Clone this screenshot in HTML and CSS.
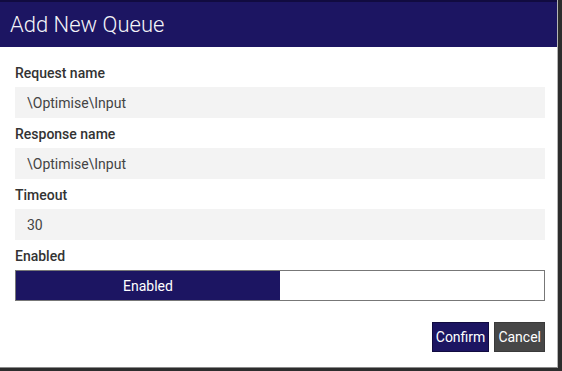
FILE: index.html
```html
<!DOCTYPE html>
<html lang="en">
<head>
  <meta charset="UTF-8">
  <title>Add New Queue</title>
  <link rel="stylesheet" href="styles.css">
</head>
<body>

  <div class="dialog">
    <div class="dialog-header">
      <h2>Add New Queue</h2>
    </div>

    <div class="dialog-body">
      <div class="field">
        <label for="request">Request name</label>
        <input type="text" id="request" value="\Optimise\Input">
      </div>

      <div class="field">
        <label for="response">Response name</label>
        <input type="text" id="response" value="\Optimise\Input">
      </div>

      <div class="field">
        <label for="timeout">Timeout</label>
        <input type="text" id="timeout" value="30">
      </div>

      <div class="field">
        <label>Enabled</label>
        <div class="toggle">
          <button class="toggle-option active">Enabled</button>
          <button class="toggle-option"></button>
        </div>
      </div>

      <div class="actions">
        <button class="btn btn-confirm">Confirm</button>
        <button class="btn btn-cancel">Cancel</button>
      </div>
    </div>
  </div>

</body>
</html>
```

FILE: styles.css
```css
:root {
  --primary-color: #1c1562;
  --primary-dark: #110b40;
  --input-bg: #f3f3f3;
  --label-color: #333;
  --text-color: #444;
}

body {
  margin: 0;
  background: #2d2d2d;
  font-family: Roboto, "Liberation Sans", Arial, sans-serif;
  height: 371px;
  overflow: hidden;
}

.dialog {
  width: 557px;
  height: 367px;
  background: #fff;
  border-right: 1px solid #b5b5b5;
  border-bottom: 1px solid #8a8a8a;
}

.dialog-header {
  background: var(--primary-color);
  border-top: 2px solid var(--primary-dark);
  height: 45px;
  padding-left: 10px;
}

.dialog-header h2 {
  margin: 0;
  color: #f4f4f8;
  font-family: "Roboto Light", Roboto, sans-serif;
  font-weight: 300;
  font-size: 22px;
  line-height: 45px;
}

.dialog-body {
  padding: 16px 12px 0 15px;
}

.field {
  margin-bottom: 6px;
}

.field label {
  display: block;
  font-size: 14px;
  font-weight: 500;
  line-height: 20px;
  color: var(--label-color);
  margin-bottom: 4px;
}

.field input {
  display: block;
  box-sizing: border-box;
  width: 100%;
  height: 31px;
  border: none;
  background: var(--input-bg);
  padding: 0 12px;
  font-family: inherit;
  font-size: 14px;
  color: var(--text-color);
  outline: none;
}

.toggle {
  display: flex;
  height: 31px;
  box-sizing: border-box;
  border: 1px solid #777;
}

.toggle-option {
  flex: 1;
  border: none;
  background: #fff;
  font-family: inherit;
  font-size: 14px;
  color: #fff;
  padding: 0;
}

.toggle-option.active {
  background: var(--primary-color);
}

.actions {
  display: flex;
  justify-content: flex-end;
  gap: 5px;
  margin-top: 21px;
}

.btn {
  height: 30px;
  padding: 0 3px;
  font-family: inherit;
  font-size: 14px;
  color: #fff;
  cursor: pointer;
}

.btn-confirm {
  background: var(--primary-color);
  border: 1px solid var(--primary-dark);
}

.btn-cancel {
  background: #474747;
  border: 1px solid #3a3a3a;
}
```
